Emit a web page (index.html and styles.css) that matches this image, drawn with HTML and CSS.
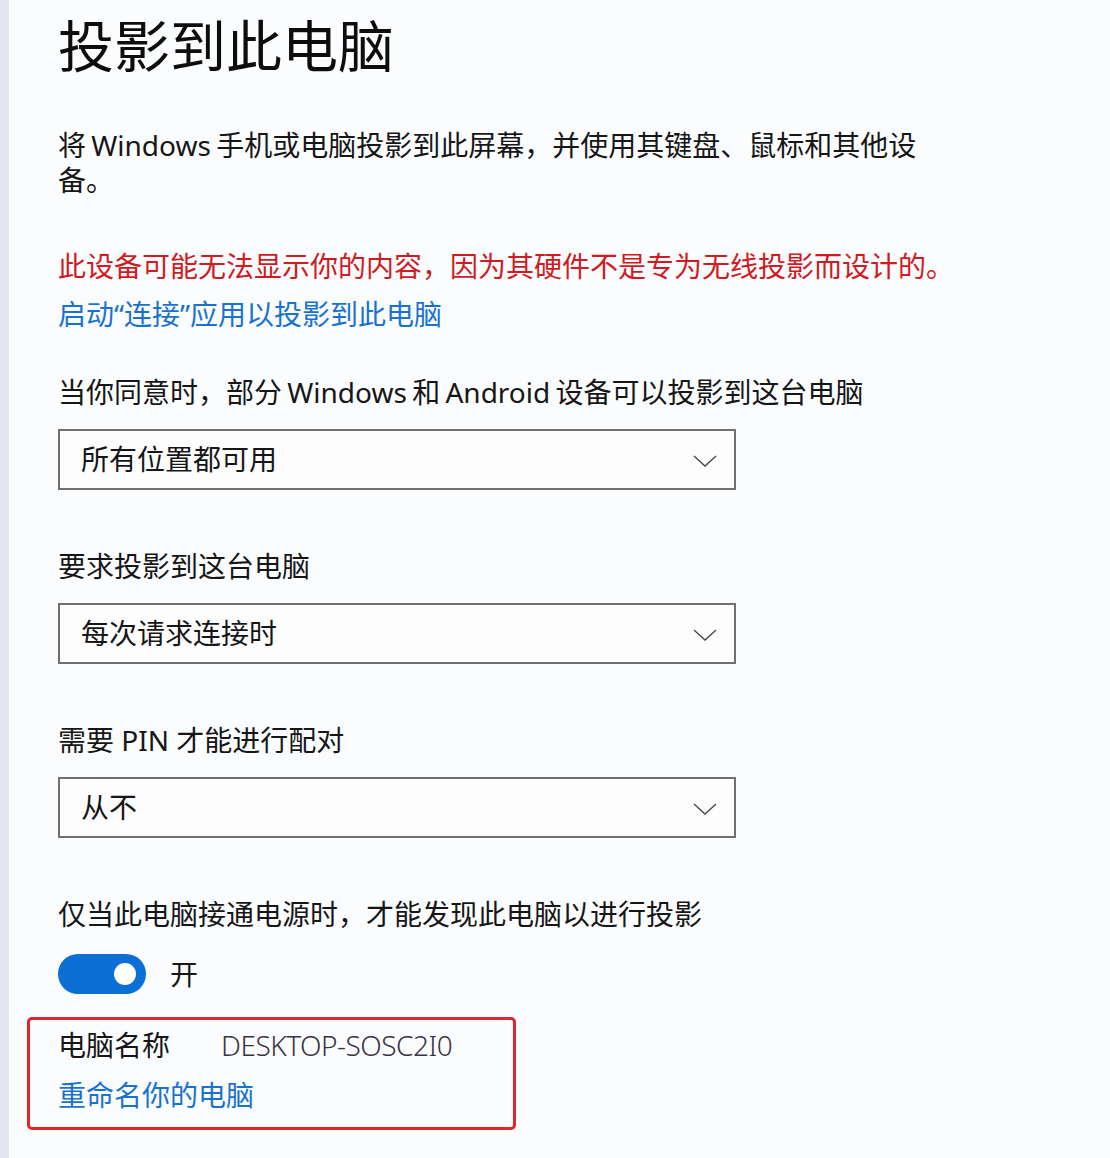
FILE: index.html
```html
<!DOCTYPE html>
<html lang="zh-CN">
<head>
<meta charset="utf-8">
<title>投影到此电脑</title>
<link rel="stylesheet" href="styles.css">
</head>
<body>
<div class="page">
  <main class="content">
    <h1 class="title">投影到此电脑</h1>
    <p class="desc">将 Windows 手机或电脑投影到此屏幕，并使用其键盘、鼠标和其他设备。</p>
    <p class="warn">此设备可能无法显示你的内容，因为其硬件不是专为无线投影而设计的。</p>
    <a class="link first-link" href="#">启动“连接”应用以投影到此电脑</a>

    <div class="label label-first">当你同意时，部分 Windows 和 Android 设备可以投影到这台电脑</div>
    <div class="select"><span class="select-text">所有位置都可用</span><svg class="chev" width="24" height="12" viewBox="0 0 24 12"><path d="M1 1 L12 11 L23 1" fill="none" stroke="#444" stroke-width="1.3"/></svg></div>

    <div class="label">要求投影到这台电脑</div>
    <div class="select"><span class="select-text">每次请求连接时</span><svg class="chev" width="24" height="12" viewBox="0 0 24 12"><path d="M1 1 L12 11 L23 1" fill="none" stroke="#444" stroke-width="1.3"/></svg></div>

    <div class="label">需要 PIN 才能进行配对</div>
    <div class="select"><span class="select-text">从不</span><svg class="chev" width="24" height="12" viewBox="0 0 24 12"><path d="M1 1 L12 11 L23 1" fill="none" stroke="#444" stroke-width="1.3"/></svg></div>

    <div class="label">仅当此电脑接通电源时，才能发现此电脑以进行投影</div>
    <div class="toggle-row">
      <span class="toggle"><span class="knob"></span></span>
      <span class="toggle-text">开</span>
    </div>

    <div class="namebox">
      <div class="name-row"><span class="name-key">电脑名称</span><span class="name-val">DESKTOP-SOSC2I0</span></div>
      <a class="link rename" href="#">重命名你的电脑</a>
    </div>
  </main>
</div>
</body>
</html>
```

FILE: styles.css
```css
* { box-sizing: border-box; }
html, body { margin: 0; padding: 0; }
body {
  background: #fbfcfe;
  font-family: "Noto Sans", "Noto Sans CJK SC", sans-serif;
  color: #161616;
}
.page {
  border-left: 9px solid #e3e8ef;
  min-height: 1158px;
  padding-left: 49px;
}
.content {
  display: flex;
  flex-direction: column;
  align-items: flex-start;
  font-size: 28px;
  line-height: 35px;
}
.title {
  margin: 17px 0 0;
  font-size: 56px;
  line-height: 56px;
  font-weight: 400;
  color: #0d0d0d;
}
.desc {
  margin: 55px 0 0;
  max-width: 872px;
  word-spacing: -2px;
}
.warn {
  margin: 51px 0 0;
  color: #cf1b22;
  white-space: nowrap;
}
.link {
  color: #1a72d0;
  text-decoration: none;
}
.first-link { margin-top: 13px; }
.label { margin-top: 59px; white-space: nowrap; }
.label-first { margin-top: 43px; word-spacing: -2px; }
.select {
  margin-top: 19px;
  width: 678px;
  height: 61px;
  border: 2px solid #707070;
  background: #fdfdfe;
  display: flex;
  align-items: center;
  justify-content: space-between;
  padding: 0 17px 0 21px;
}
.chev { display: block; margin-top: 2px; }
.toggle-row {
  margin-top: 22px;
  display: flex;
  align-items: center;
  gap: 24px;
}
.toggle {
  width: 88px;
  height: 40px;
  border-radius: 20px;
  background: #0b6fd6;
  display: flex;
  align-items: center;
  justify-content: flex-end;
  padding-right: 10px;
}
.knob {
  width: 22px;
  height: 22px;
  border-radius: 50%;
  background: #fff;
}
.toggle-text { line-height: 35px; }
.namebox {
  margin-top: 23px;
  margin-left: -31px;
  width: 489px;
  border: 3px solid #e3242b;
  border-radius: 5px;
  padding: 8px 28px 14px;
  display: flex;
  flex-direction: column;
  align-items: flex-start;
}
.name-row { display: flex; gap: 51px; }
.name-val { color: #3a3344; font-weight: 300; letter-spacing: -0.5px; }
.rename { margin-top: 15px; }
```
